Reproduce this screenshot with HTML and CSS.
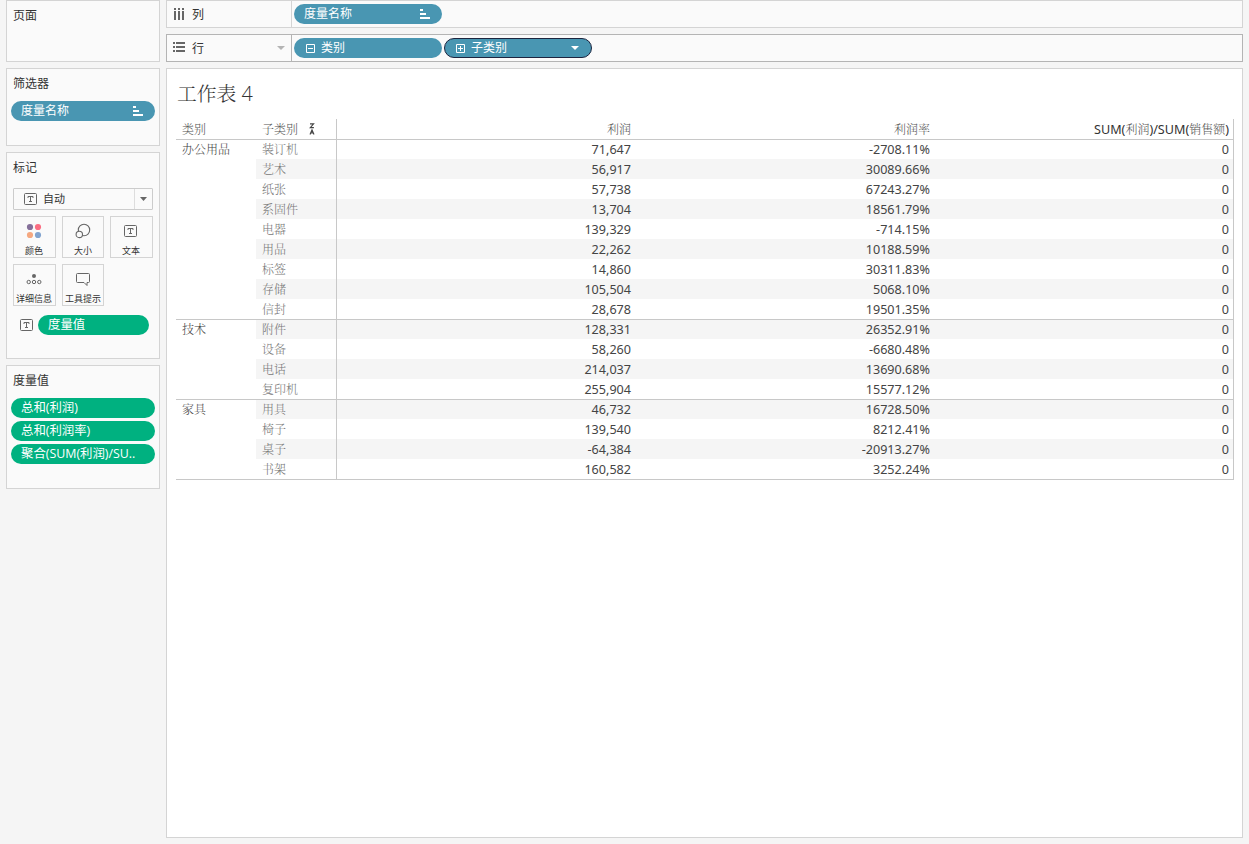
FILE: index.html
```html
<!DOCTYPE html>
<html lang="zh-CN">
<head>
  <meta charset="UTF-8" />
  <meta name="viewport" content="width=device-width, initial-scale=1.0" />
  <title>工作表 4</title>
  <link rel="stylesheet" href="styles.css">
</head>
<body>
  <div class="workspace">
    <div class="side">
      <div class="card pages">
        <div class="card-title">页面</div>
      </div>

      <div class="card filters">
        <div class="card-title">筛选器</div>
        <div class="pill blue">
          <span>度量名称</span>
          <svg class="sort-icon" width="10" height="10" viewBox="0 0 10 10"><path d="M0 0h3v2H0zM0 4h6v2H0zM0 8h10v2H0z" fill="#fff"/></svg>
        </div>
      </div>

      <div class="card marks">
        <div class="card-title">标记</div>
        <div class="mark-type">
          <svg width="13" height="12" viewBox="0 0 13 12"><rect x=".5" y=".5" width="12" height="11" rx="1" fill="none" stroke="#666"/><path d="M4 5V3.5h5V5M6.5 3.5v5M5 8.5h3" fill="none" stroke="#666"/></svg>
          <span>自动</span>
          <div class="mark-arrow"><svg width="7" height="4" viewBox="0 0 7 4"><path d="M0 0h7L3.5 4z" fill="#666"/></svg></div>
        </div>
        <div class="mark-buttons">
          <div class="mark-button">
            <svg width="16" height="16" viewBox="0 0 16 16"><circle cx="4" cy="4" r="3.1" fill="#85709a"/><circle cx="12" cy="4" r="3.1" fill="#fb6e83"/><circle cx="4" cy="12" r="3.1" fill="#f5a880"/><circle cx="12" cy="12" r="3.1" fill="#82a4cf"/></svg>
            <span>颜色</span>
          </div>
          <div class="mark-button">
            <svg width="16" height="16" viewBox="0 0 16 16"><circle cx="9" cy="7" r="5.7" fill="none" stroke="#666" stroke-width="1.1"/><circle cx="4.3" cy="11.4" r="3.2" fill="#fafafa" stroke="#666" stroke-width="1.1"/></svg>
            <span>大小</span>
          </div>
          <div class="mark-button">
            <svg width="16" height="16" viewBox="0 0 16 16"><rect x="1.5" y="2.5" width="12" height="11" rx="1" fill="none" stroke="#666"/><path d="M5 7V5.5h5V7M7.5 5.5v5M6 10.5h3" fill="none" stroke="#666"/></svg>
            <span>文本</span>
          </div>
          <div class="mark-button">
            <svg width="16" height="16" viewBox="0 0 16 16"><circle cx="8" cy="5" r="2" fill="#666"/><g fill="none" stroke="#666"><circle cx="2.7" cy="11" r="1.7"/><circle cx="8" cy="11" r="1.7"/><circle cx="13.3" cy="11" r="1.7"/></g></svg>
            <span>详细信息</span>
          </div>
          <div class="mark-button">
            <svg width="16" height="16" viewBox="0 0 16 16"><path d="M2.5 2.5h11a1 1 0 0 1 1 1v7a1 1 0 0 1-1 1H12v3L9 11.5H2.5a1 1 0 0 1-1-1v-7a1 1 0 0 1 1-1z" fill="none" stroke="#666"/></svg>
            <span>工具提示</span>
          </div>
        </div>
        <div class="mark-field">
          <svg width="13" height="12" viewBox="0 0 13 12"><rect x=".5" y=".5" width="12" height="11" rx="1" fill="none" stroke="#666"/><path d="M4 5V3.5h5V5M6.5 3.5v5M5 8.5h3" fill="none" stroke="#666"/></svg>
          <div class="pill green">度量值</div>
        </div>
      </div>

      <div class="card measures">
        <div class="card-title">度量值</div>
        <div class="measure-list">
          <div class="pill green">总和(利润)</div>
          <div class="pill green">总和(利润率)</div>
          <div class="pill green">聚合(SUM(利润)/SU..</div>
        </div>
      </div>
    </div>

    <div class="main">
      <div class="shelf">
        <div class="shelf-label">
          <svg width="12" height="12" viewBox="0 0 12 12"><path d="M1 0h2v2H1zM5 0h2v2H5zM9 0h2v2H9zM1 3h2v9H1zM5 3h2v9H5zM9 3h2v9H9z" fill="#666"/></svg>
          <span>列</span>
        </div>
        <div class="pill blue">
          <span>度量名称</span>
          <svg class="sort-icon" width="10" height="10" viewBox="0 0 10 10"><path d="M0 0h3v2H0zM0 4h6v2H0zM0 8h10v2H0z" fill="#fff"/></svg>
        </div>
      </div>

      <div class="shelf active">
        <div class="shelf-label">
          <svg width="12" height="12" viewBox="0 0 12 12"><path d="M0 0h2v2H0zM0 4h2v2H0zM0 8h2v2H0zM3 0h9v2H3zM3 4h9v2H3zM3 8h9v2H3z" fill="#666"/></svg>
          <span>行</span>
          <svg class="shelf-arrow" width="8" height="4" viewBox="0 0 8 4"><path d="M0 0h8L4 4z" fill="#b4b4b4"/></svg>
        </div>
        <div class="pill blue expanded">
          <svg class="toggle" width="9" height="9" viewBox="0 0 9 9"><path d="M.5.5h8v8h-8zM2 4.5h5" fill="none" stroke="#fff"/></svg>
          <span>类别</span>
        </div>
        <div class="pill blue selected">
          <svg class="toggle" width="9" height="9" viewBox="0 0 9 9"><path d="M.5.5h8v8h-8zM2 4.5h5M4.5 2v5" fill="none" stroke="#fff"/></svg>
          <span>子类别</span>
          <svg class="pill-arrow" width="8" height="4" viewBox="0 0 8 4"><path d="M0 0h8L4 4z" fill="#fff"/></svg>
        </div>
      </div>

      <div class="sheet">
        <div class="sheet-title">工作表 4</div>
        <table class="crosstab">
          <colgroup>
            <col class="col-dim"><col class="col-dim"><col class="col-value"><col class="col-value"><col class="col-last">
          </colgroup>
          <thead>
            <tr>
              <th>类别</th>
              <th>
                <div class="sorted">子类别
                  <svg width="6" height="12" viewBox="0 0 6 12"><path d="M1 .9h3.6L1.3 4.6h3.6M1 11.5L3 6.9l2 4.6M1.7 9.9h2.6" fill="none" stroke="#444" stroke-width="1.1"/></svg>
                </div>
              </th>
              <th class="value">利润</th>
              <th class="value">利润率</th>
              <th class="value"><b>SUM(</b>利润<b>)/SUM(</b>销售额<b>)</b></th>
            </tr>
          </thead>
          <tbody>
            <tr class="group"><td class="category" rowspan="9">办公用品</td><td class="sub">装订机</td><td>71,647</td><td>-2708.11%</td><td>0</td></tr>
            <tr><td class="sub">艺术</td><td>56,917</td><td>30089.66%</td><td>0</td></tr>
            <tr><td class="sub">纸张</td><td>57,738</td><td>67243.27%</td><td>0</td></tr>
            <tr><td class="sub">系固件</td><td>13,704</td><td>18561.79%</td><td>0</td></tr>
            <tr><td class="sub">电器</td><td>139,329</td><td>-714.15%</td><td>0</td></tr>
            <tr><td class="sub">用品</td><td>22,262</td><td>10188.59%</td><td>0</td></tr>
            <tr><td class="sub">标签</td><td>14,860</td><td>30311.83%</td><td>0</td></tr>
            <tr><td class="sub">存储</td><td>105,504</td><td>5068.10%</td><td>0</td></tr>
            <tr><td class="sub">信封</td><td>28,678</td><td>19501.35%</td><td>0</td></tr>
            <tr class="group"><td class="category" rowspan="4">技术</td><td class="sub">附件</td><td>128,331</td><td>26352.91%</td><td>0</td></tr>
            <tr><td class="sub">设备</td><td>58,260</td><td>-6680.48%</td><td>0</td></tr>
            <tr><td class="sub">电话</td><td>214,037</td><td>13690.68%</td><td>0</td></tr>
            <tr><td class="sub">复印机</td><td>255,904</td><td>15577.12%</td><td>0</td></tr>
            <tr class="group"><td class="category" rowspan="4">家具</td><td class="sub">用具</td><td>46,732</td><td>16728.50%</td><td>0</td></tr>
            <tr><td class="sub">椅子</td><td>139,540</td><td>8212.41%</td><td>0</td></tr>
            <tr><td class="sub">桌子</td><td>-64,384</td><td>-20913.27%</td><td>0</td></tr>
            <tr><td class="sub">书架</td><td>160,582</td><td>3252.24%</td><td>0</td></tr>
          </tbody>
        </table>
      </div>
    </div>
  </div>
</body>
</html>
```
FILE: styles.css
```css
* { box-sizing: border-box; }
body {
  margin: 0;
  font-family: "Open Sans", "Noto Sans CJK SC", sans-serif;
  font-size: 12px;
  background: #f5f5f5;
  color: #333;
}
svg {
  display: block;
  flex: none;
}
.workspace {
  display: flex;
  gap: 6px;
  height: 844px;
  padding: 0 6px;
}
.side {
  width: 154px;
  display: flex;
  flex-direction: column;
  gap: 6px;
}
.card {
  background: #fafafa;
  border: 1px solid #d4d4d4;
  padding: 6px 4px 0;
}
.card-title {
  height: 18px;
  line-height: 18px;
  padding-left: 2px;
}
.pages { height: 62px; }
.filters { height: 78px; }
.marks { height: 207px; }
.measures { height: 124px; }

.pill {
  display: flex;
  align-items: center;
  height: 20px;
  line-height: 20px;
  padding: 0 10px;
  border-radius: 10px;
  color: #fff;
  white-space: nowrap;
}
.blue { background: #4996b2; }
.green {
  background: #00b180;
  font-size: 12.4px;
}
.sort-icon {
  margin-left: auto;
  margin-right: 2px;
}
.toggle { margin-right: 6px; }
.filters .pill { margin-top: 8px; }
.measure-list {
  display: flex;
  flex-direction: column;
  gap: 3px;
  margin-top: 8px;
}

.mark-type {
  display: flex;
  align-items: center;
  height: 22px;
  margin: 11px 2px 6px;
  padding-left: 10px;
  border: 1px solid #ccc;
  border-radius: 1px;
  font-size: 11px;
  line-height: 18px;
}
.mark-type span {
  margin-left: 6px;
  padding-bottom: 1px;
}
.mark-arrow {
  display: flex;
  align-items: center;
  justify-content: center;
  width: 18px;
  height: 20px;
  margin-left: auto;
  border-left: 1px solid #ddd;
}
.mark-buttons {
  display: grid;
  grid-template-columns: 43px 42px 43px;
  gap: 6px;
  margin: 0 2px;
}
.mark-button {
  display: flex;
  flex-direction: column;
  align-items: center;
  height: 42px;
  padding-top: 6px;
  border: 1px solid #d4d4d4;
  font-size: 9px;
  line-height: 12px;
  white-space: nowrap;
}
.mark-button:nth-child(3n),
.mark-button:nth-child(3n + 1) { padding-right: 1px; }
.mark-button span { margin-top: 6px; }
.mark-field {
  display: flex;
  align-items: center;
  gap: 5px;
  margin: 9px 6px 0 9px;
}
.mark-field .pill { flex: 1; }

.main {
  flex: 1;
  display: flex;
  flex-direction: column;
  gap: 6px;
}
.shelf {
  display: flex;
  align-items: center;
  gap: 2px;
  height: 28px;
  background: #fafafa;
  border: 1px solid #d4d4d4;
}
.shelf-label {
  display: flex;
  align-items: center;
  width: 125px;
  height: 26px;
  padding: 0 6px;
  border-right: 1px solid #d4d4d4;
}
.shelf-label span { margin-left: 7px; }
.shelf-arrow { margin-left: auto; }
.shelf .pill { width: 148px; }
.pill-arrow { margin-left: auto; margin-right: 4px; }
.active,
.active .shelf-label { border-color: #b4b4b4; }
.expanded { padding-left: 12px; }
.selected {
  padding: 0 8px 0 11px;
  border: 1px solid #1d2540;
}

.sheet {
  height: 770px;
  padding: 10px 8px 0 9px;
  background: #fff;
  border: 1px solid #d4d4d4;
}
.sheet-title {
  height: 40px;
  padding-left: 1px;
  font-family: "Open Sans", "Noto Serif CJK SC", "Noto Sans CJK SC", sans-serif;
  font-size: 19.8px;
  font-weight: 300;
  line-height: 30px;
}
.crosstab {
  table-layout: fixed;
  width: 1058px;
  border-collapse: separate;
  border-spacing: 0;
  border-right: 1px solid #c8c8c8;
  border-bottom: 1px solid #c8c8c8;
  font-family: "Noto Sans", "Noto Serif CJK SC", "Noto Sans CJK SC", sans-serif;
}
.col-dim { width: 80px; }
.col-value, .col-last { width: 299px; }
.crosstab th,
.crosstab td {
  height: 20px;
  padding: 0 4px 0 6px;
  line-height: 19px;
  white-space: nowrap;
}
.crosstab th {
  text-align: left;
  font-weight: 300;
  color: #555;
}
.crosstab th b {
  font-size: 12.6px;
  font-weight: 400;
  color: #333;
}
.crosstab .value { text-align: right; }
.crosstab td {
  text-align: right;
  font-size: 12.6px;
  color: #444;
}
.crosstab .category,
.crosstab .sub {
  text-align: left;
  font-size: 12px;
  font-weight: 300;
}
.crosstab .category {
  vertical-align: top;
  background: #fff;
}
.crosstab .sub { color: #777; }
.crosstab tr:nth-child(even) td:not(.category) { background: #f5f5f5; }
.crosstab .group td { border-top: 1px solid #c8c8c8; }
.crosstab th:nth-child(3),
.crosstab .sub + td { border-left: 1px solid #c8c8c8; }
.sorted {
  display: flex;
  align-items: center;
  gap: 11px;
}
```
